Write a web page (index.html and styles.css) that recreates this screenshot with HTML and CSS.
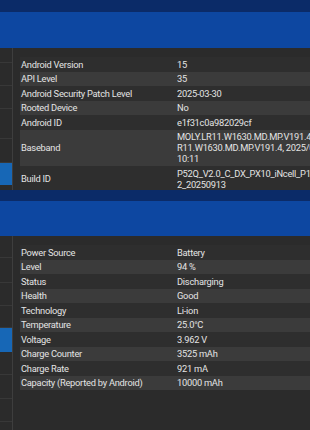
FILE: index.html
```html
<!DOCTYPE html>
<html>
<head>
<meta charset="utf-8">
<link rel="stylesheet" href="styles.css">
</head>
<body>
<section class="screen screen-top">
  <div class="statusbar"></div>
  <div class="appbar"></div>
  <div class="content">
    <nav class="sidebar">
      <div class="nav-item h15"></div>
      <div class="nav-item h23"></div>
      <div class="nav-item h23"></div>
      <div class="nav-item h30"></div>
      <div class="nav-item h24"></div>
      <div class="nav-item selected h22"></div>
      <div class="nav-item rest"></div>
    </nav>
    <div class="panel">
      <div class="table">
        <div class="row"><div class="label">Android Version</div><div class="value">15</div></div>
        <div class="row"><div class="label">API Level</div><div class="value">35</div></div>
        <div class="row"><div class="label">Android Security Patch Level</div><div class="value">2025-03-30</div></div>
        <div class="row"><div class="label">Rooted Device</div><div class="value">No</div></div>
        <div class="row"><div class="label">Android ID</div><div class="value">e1f31c0a982029cf</div></div>
        <div class="row"><div class="label">Baseband</div><div class="value">MOLY.LR11.W1630.MD.MP.V191.4, MOLY.L<br>R11.W1630.MD.MP.V191.4, 2025/09/13<br>10:11</div></div>
        <div class="row"><div class="label">Build ID</div><div class="value">P52Q_V2.0_C_DX_PX10_iNcell_P100<br>2_20250913</div></div>
      </div>
    </div>
  </div>
</section>
<section class="screen screen-bottom">
  <div class="statusbar"></div>
  <div class="appbar"></div>
  <div class="content">
    <nav class="sidebar">
      <div class="nav-item h22"></div>
      <div class="nav-item h25"></div>
      <div class="nav-item h23"></div>
      <div class="nav-item h22"></div>
      <div class="nav-item selected h24"></div>
      <div class="nav-item h23"></div>
      <div class="nav-item h24"></div>
      <div class="nav-item h23"></div>
      <div class="nav-item rest"></div>
    </nav>
    <div class="panel">
      <div class="table">
        <div class="row"><div class="label">Power Source</div><div class="value">Battery</div></div>
        <div class="row"><div class="label">Level</div><div class="value">94 %</div></div>
        <div class="row"><div class="label">Status</div><div class="value">Discharging</div></div>
        <div class="row"><div class="label">Health</div><div class="value">Good</div></div>
        <div class="row"><div class="label">Technology</div><div class="value">Li-ion</div></div>
        <div class="row"><div class="label">Temperature</div><div class="value">25.0°C</div></div>
        <div class="row"><div class="label">Voltage</div><div class="value">3.962 V</div></div>
        <div class="row"><div class="label">Charge Counter</div><div class="value">3525 mAh</div></div>
        <div class="row"><div class="label">Charge Rate</div><div class="value">921 mA</div></div>
        <div class="row"><div class="label">Capacity (Reported by Android)</div><div class="value">10000 mAh</div></div>
      </div>
    </div>
  </div>
</section>
</body>
</html>
```
FILE: styles.css
```css
html, body {
  margin: 0;
  padding: 0;
  width: 310px;
  height: 430px;
  overflow: hidden;
  background: #2b2b2b;
  font-family: Roboto, "Noto Sans", sans-serif;
  color: #e4e4e4;
}

.screen {
  display: flex;
  flex-direction: column;
}

.screen-top {
  height: 189.5px;
  overflow: hidden;
}

.screen-bottom {
  height: 240.5px;
  overflow: hidden;
}

.statusbar {
  background: #0b2b68;
  flex: none;
}

.screen-top .statusbar { height: 12px; }
.screen-bottom .statusbar { height: 11.5px; }

.appbar {
  background: #0d47a1;
  flex: none;
}

.screen-top .appbar { height: 36px; }
.screen-bottom .appbar { height: 35px; }

.content {
  flex: 1;
  display: flex;
  min-height: 0;
}

.sidebar {
  width: 12px;
  flex: none;
  display: flex;
  flex-direction: column;
  border-right: 1px solid #3e3e3e;
  background: #2b2b2b;
}

.nav-item {
  box-sizing: border-box;
  border-bottom: 1px solid #383838;
  flex: none;
}

.nav-item.selected {
  background: #1767b6;
  border-bottom-color: #1767b6;
}

.nav-item.rest {
  flex: 1;
  border-bottom: none;
}

.h15 { height: 15px; }
.h22 { height: 22px; }
.h23 { height: 23px; }
.h24 { height: 24px; }
.h25 { height: 25px; }
.h30 { height: 30px; }

.panel {
  flex: 1;
  padding: 9px 0 0 7px;
  min-width: 0;
  overflow: hidden;
}

.table {
  display: flex;
  flex-direction: column;
}

.row {
  display: grid;
  grid-template-columns: 156px 1fr;
  align-items: center;
  padding: 1.75px 0 1.75px 1px;
  font-size: 9.3px;
  letter-spacing: -0.25px;
  line-height: 11px;
  background: #2e2e2e;
  white-space: nowrap;
}

.row:nth-child(even) {
  background: #3b3b3b;
}

.value {
  overflow: hidden;
}
```
